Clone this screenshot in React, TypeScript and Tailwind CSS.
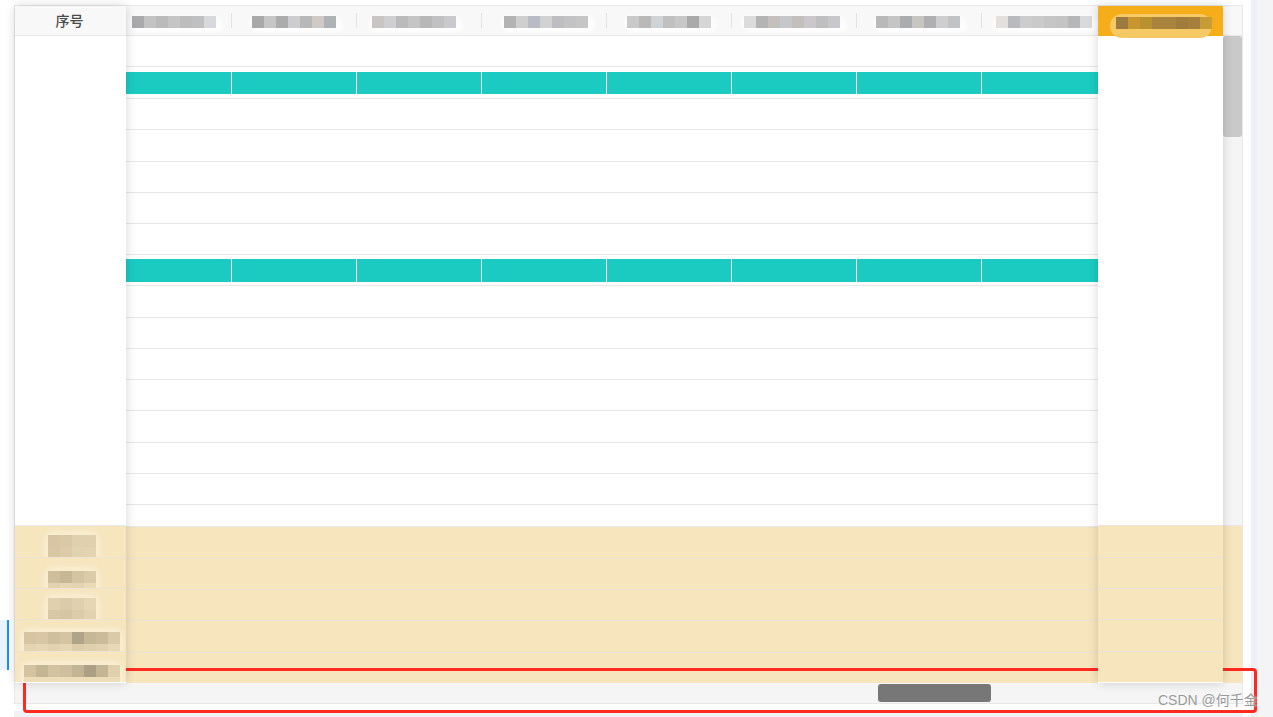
import React from "react";

const headerBlurs: { pl: string; w: string; colors: string[] }[] = [
  { pl: "pl-[6px]", w: "w-[106px]", colors: ["#aaaaac", "#c3c3c3", "#bbbbbb", "#c5c5c5", "#bdbdbd", "#c0c0c0", "#d7d9dc"] },
  { pl: "pl-[20px]", w: "w-[125px]", colors: ["#a9a9a9", "#c6c6c6", "#acacac", "#cdcdd0", "#b8b8b8", "#cfcac5", "#b0b3b6"] },
  { pl: "pl-[15px]", w: "w-[125px]", colors: ["#c9c5c4", "#cfcfd3", "#bbbbbb", "#c5c5c5", "#b8b8b8", "#c1c1c1", "#cacace"] },
  { pl: "pl-[22px]", w: "w-[125px]", colors: ["#b3b3b3", "#cfcfcf", "#babcc5", "#d2d2d2", "#bebec2", "#c3c3c3", "#c6c6c6"] },
  { pl: "pl-[20px]", w: "w-[125px]", colors: ["#c9c9c9", "#bbb8b8", "#cfd3d6", "#c0c0c0", "#c7c7c7", "#aaaaaa", "#d6d6d6"] },
  { pl: "pl-[12px]", w: "w-[125px]", colors: ["#dcdcdc", "#b4b4b4", "#c4c0bd", "#c5c7ca", "#c2bfbc", "#c9c9cc", "#bfbfbf", "#c8c8cc"] },
  { pl: "pl-[19px]", w: "w-[125px]", colors: ["#b9b9b9", "#c5c5c5", "#aaacae", "#c9c6c2", "#b0b0b3", "#cecece", "#c1c3c5"] },
  { pl: "pl-[14px]", w: "w-[116px]", colors: ["#e4e0dd", "#b8babd", "#cdcdcd", "#cacaca", "#c6c6c6", "#c4c4c4", "#b7b7b7", "#d9dadc"] },
];

const colWidths = ["w-[106px]", "w-[125px]", "w-[125px]", "w-[125px]", "w-[125px]", "w-[125px]", "w-[125px]", "w-[116px]"];

const bodyRows: { h: string; teal?: string }[] = [
  { h: "h-[31px]" },
  { h: "h-[32px]", teal: "pt-[5px] h-[27px]" },
  { h: "h-[31px]" },
  { h: "h-[32px]" },
  { h: "h-[31px]" },
  { h: "h-[31px]" },
  { h: "h-[31px]" },
  { h: "h-[31px]", teal: "pt-[4px] h-[27px]" },
  { h: "h-[32px]" },
  { h: "h-[31px]" },
  { h: "h-[31px]" },
  { h: "h-[31px]" },
  { h: "h-[32px]" },
  { h: "h-[31px]" },
  { h: "h-[31px]" },
];

const footerRows = ["h-[32px] border-b", "h-[31px] border-b", "h-[31px] border-b", "h-[32px] border-b", "h-[30px]"];

const leftFooterBlur: { pt: string; pl: string; top: string[]; bottom: string[] }[] = [
  { pt: "pt-[4px]", pl: "pl-[33px]", top: ["#d7c5a3", "#dbc8a5", "#e0d0ad", "#e0d0ad"], bottom: ["#d9c7a4", "#dccaa8", "#e2d3b0", "#e3d3b0"] },
  { pt: "pt-[8px]", pl: "pl-[33px]", top: ["#cfbd9c", "#c6b795", "#d5c4a1", "#dccba8"], bottom: ["#e2d2b0", "#e6d6b3", "#e4d4b1", "#eadab6"] },
  { pt: "pt-[4px]", pl: "pl-[33px]", top: ["#e0d0ad", "#dccbaa", "#e0d0ae", "#e6d6b3"], bottom: ["#d9c8a6", "#d6c5a3", "#dccba9", "#e2d2b0"] },
  { pt: "pt-[7px]", pl: "pl-[9px]", top: ["#d6c4a2", "#d8c6a4", "#cfbf9c", "#d5c4a2", "#b0a488", "#c6b797", "#cbbb9a", "#dacaa8"], bottom: ["#e4d4b2", "#e6d6b4", "#e2d2b0", "#e6d6b4", "#dccdab", "#e0d0ae", "#e2d2b0", "#e8d8b6"] },
  { pt: "pt-[8px]", pl: "pl-[9px]", top: ["#d4c3a1", "#c4b595", "#d3c2a0", "#d0bf9e", "#c3b494", "#ab9f86", "#c4b595", "#e0d0ad"], bottom: ["#ecdcb8", "#ecdcb8", "#ecdcb8", "#ecdcb8", "#ecdcb8", "#ecdcb8", "#ecdcb8", "#ecdcb8"] },
];

function Blocks({ colors }: { colors: string[] }) {
  return (
    <div className="flex">
      {colors.map((c, i) => (
        <div key={i} className="w-[12px] h-[12px]" style={{ backgroundColor: c }} />
      ))}
    </div>
  );
}

export default function App() {
  return (
    <div className="relative w-[1273px] h-[717px] bg-white overflow-hidden flex font-['Liberation_Sans','Noto_Sans_CJK_SC',sans-serif]">
      {/* left page margin with active indicator */}
      <div className="w-[14px] flex flex-col pt-[620px]">
        <div className="w-[9px] h-[50px] bg-[#e8f4ff] border-r-2 border-[#1890ff]" />
      </div>

      {/* table area */}
      <div className="w-[1229px] flex flex-col pt-[5px]">
        <div className="border border-[#e8e8e8] flex flex-col">
          <div className="flex h-[677px]">
            {/* left fixed column */}
            <div className="relative z-10 w-[111px] flex flex-col bg-white shadow-[0_0_10px_rgba(0,0,0,0.16)]">
              <div className="h-[30px] bg-[#f8f8f8] border-b border-[#e8e8e8] flex items-center justify-center pb-[2px] pr-[2px]">
                <span className="text-[14px] font-medium text-[#4a4a4a] font-['Noto_Sans_CJK_SC',sans-serif] leading-none">序号</span>
              </div>
              <div className="h-[490px] bg-white border-b border-[#e8e8e8]" />
              <div className="bg-[#f6e5bd] flex flex-col">
                {footerRows.map((r, i) => (
                  <div key={i} className={`${r} border-[#ebe4d4] overflow-hidden ${leftFooterBlur[i].pt} ${leftFooterBlur[i].pl}`}>
                    <div className="inline-flex flex-col rounded-[6px] shadow-[0_0_6px_4px_rgba(250,240,215,0.9)]">
                      <Blocks colors={leftFooterBlur[i].top} />
                      <Blocks colors={leftFooterBlur[i].bottom} />
                    </div>
                  </div>
                ))}
              </div>
            </div>

            {/* scrolling middle */}
            <div className="w-[972px] flex flex-col">
              <div className="h-[30px] bg-[#f8f8f8] border-b border-[#e8e8e8] flex">
                {headerBlurs.map((b, i) => (
                  <div key={i} className={`${b.w} h-full flex items-center justify-between pt-[3px] ${b.pl}`}>
                    <div className="flex items-center rounded-full bg-[#fcfcfc] shadow-[0_2px_4px_2px_rgba(255,255,255,0.9)] pr-[4px]">
                      <Blocks colors={b.colors} />
                    </div>
                    {i < 7 ? <div className="w-px h-[15px] -mt-[3px] bg-[#e2e2e2]" /> : <div />}
                  </div>
                ))}
              </div>
              <div className="h-[490px] flex flex-col bg-white">
                {bodyRows.map((r, i) => (
                  <div key={i} className={`${r.h} border-b border-[#e8e8e8] shrink-0`}>
                    {r.teal ? (
                      <div className={`${r.teal} flex`}>
                        {colWidths.map((w, j) => (
                          <div key={j} className={`${w} h-full bg-[#1bcbc2] ${j < 7 ? "border-r border-white" : ""}`} />
                        ))}
                      </div>
                    ) : null}
                  </div>
                ))}
                <div className="h-[21px]" />
              </div>
              <div className="border-t border-[#e8e8e8] bg-[#f6e5bd] flex flex-col">
                {footerRows.map((r, i) => (
                  <div key={i} className={`${r} border-[#ebe4d4]`} />
                ))}
              </div>
            </div>

            {/* right fixed column */}
            <div className="relative z-10 w-[125px] flex flex-col bg-white shadow-[0_0_10px_rgba(0,0,0,0.16)]">
              <div className="relative z-10 h-[30px] bg-[#f5ae1a] flex items-center pl-[18px] pt-[3px]">
                <div className="absolute left-[12px] top-[8px] w-[102px] h-[24px] rounded-full bg-[#f7c965]" />
                <div className="relative">
                  <Blocks colors={["#9a7a40", "#c8952e", "#b9902f", "#a8823e", "#a7833d", "#a07c3c", "#a67f3c", "#c79c35"]} />
                </div>
              </div>
              <div className="h-[490px] bg-white border-b border-[#ebe4d4]" />
              <div className="bg-[#f6e5bd] flex flex-col">
                {footerRows.map((r, i) => (
                  <div key={i} className={`${r} border-[#ebe4d4]`} />
                ))}
              </div>
            </div>

            {/* vertical scrollbar */}
            <div className="w-[19px] flex flex-col">
              <div className="h-[30px] bg-[#f8f8f8] border-b border-[#e8e8e8]" />
              <div className="h-[490px] bg-[#f5f5f5] border-b border-[#e8e8e8] flex flex-col">
                <div className="h-[101px] w-full rounded-[3px] bg-[#c9c9c9]" />
              </div>
              <div className="flex-1 bg-[#f6e5bd]" />
            </div>
          </div>

          {/* horizontal scrollbar */}
          <div className="h-[20px] bg-[#f5f5f5] pl-[863px] pt-[1px]">
            <div className="w-[113px] h-[18px] rounded-[3px] bg-[#777777]" />
          </div>
        </div>
        <div className="h-[6px] mt-[7px] bg-[#f2f2f4]" />
      </div>

      <div className="w-[8px]" />
      <div className="w-[22px] h-full bg-[#f4f4f7] border-l-[6px] border-[#eef0f5]" />

      {/* annotation overlay */}
      <div className="absolute left-[23px] top-[668px] w-[1234px] h-[45px] border-[3px] border-[#ff2a1f] rounded-[4px] pointer-events-none" />
      <div className="absolute left-[1158px] top-[692px] text-[14px] leading-[16px] text-[#9a9a9a] whitespace-nowrap [text-shadow:0_0_2px_#fff]">
        CSDN @何千金
      </div>
    </div>
  );
}
